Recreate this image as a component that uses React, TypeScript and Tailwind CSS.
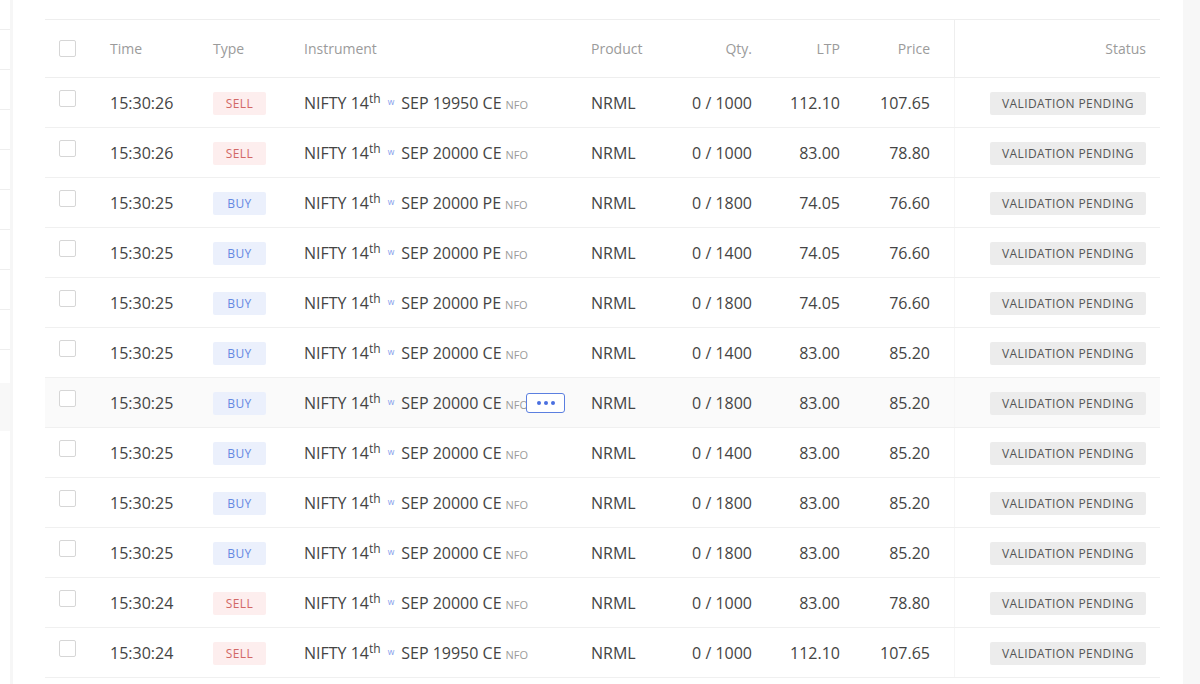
import React from "react";

type Row = {
  time: string;
  type: "SELL" | "BUY";
  strike: string;
  qty: string;
  ltp: string;
  price: string;
};

const rows: Row[] = [
  { time: "15:30:26", type: "SELL", strike: "19950 CE", qty: "0 / 1000", ltp: "112.10", price: "107.65" },
  { time: "15:30:26", type: "SELL", strike: "20000 CE", qty: "0 / 1000", ltp: "83.00", price: "78.80" },
  { time: "15:30:25", type: "BUY", strike: "20000 PE", qty: "0 / 1800", ltp: "74.05", price: "76.60" },
  { time: "15:30:25", type: "BUY", strike: "20000 PE", qty: "0 / 1400", ltp: "74.05", price: "76.60" },
  { time: "15:30:25", type: "BUY", strike: "20000 PE", qty: "0 / 1800", ltp: "74.05", price: "76.60" },
  { time: "15:30:25", type: "BUY", strike: "20000 CE", qty: "0 / 1400", ltp: "83.00", price: "85.20" },
  { time: "15:30:25", type: "BUY", strike: "20000 CE", qty: "0 / 1800", ltp: "83.00", price: "85.20" },
  { time: "15:30:25", type: "BUY", strike: "20000 CE", qty: "0 / 1400", ltp: "83.00", price: "85.20" },
  { time: "15:30:25", type: "BUY", strike: "20000 CE", qty: "0 / 1800", ltp: "83.00", price: "85.20" },
  { time: "15:30:25", type: "BUY", strike: "20000 CE", qty: "0 / 1800", ltp: "83.00", price: "85.20" },
  { time: "15:30:24", type: "SELL", strike: "20000 CE", qty: "0 / 1000", ltp: "83.00", price: "78.80" },
  { time: "15:30:24", type: "SELL", strike: "19950 CE", qty: "0 / 1000", ltp: "112.10", price: "107.65" },
];

function Checkbox({ className = "" }: { className?: string }) {
  return (
    <div
      className={
        "w-[17px] h-[17px] border border-[#d6d6d6] rounded-[2px] bg-white " + className
      }
    />
  );
}

function TypeBadge({ type }: { type: "SELL" | "BUY" }) {
  const cls =
    type === "SELL"
      ? "bg-[#fdeeee] text-[#d26865]"
      : "bg-[#ebf0fc] text-[#6487e2]";
  return (
    <span
      className={
        "inline-flex items-center justify-center w-[53px] h-[23px] mt-[2px] rounded-[2px] text-[12px] tracking-[0.4px] " +
        cls
      }
    >
      {type}
    </span>
  );
}

export default function App() {
  return (
    <div
      className="w-[1200px] h-[684px] overflow-hidden flex bg-white text-[#444444]"
      style={{ fontFamily: '"Open Sans", "Noto Sans", sans-serif' }}
    >
      {/* left strip */}
      <div className="w-[10px] flex-none bg-white">
        <div className="flex flex-col">
          <div className="h-[30px] border-b border-[#eeeeee]" />
          {[0, 1, 2, 3, 4, 5, 6, 7].map((i) => (
            <div key={i} className="h-[40px] border-b border-[#eeeeee]" />
          ))}
          <div className="h-[33px]" />
          <div className="h-[48px] bg-[#f8f8f8]" />
        </div>
      </div>
      <div className="w-[3px] flex-none bg-[#f6f6f6]" />

      {/* main panel */}
      <div className="flex-1 pl-[32px] pt-[19px]">
        <div className="w-[1115px] border-t border-[#eeeeee]">
          {/* header */}
          <div className="flex h-[58px] items-center text-[14px] text-[#9b9b9b] border-b border-[#eeeeee]">
            <div className="w-[65px] pl-[14px] flex-none">
              <Checkbox />
            </div>
            <div className="w-[103px] flex-none">Time</div>
            <div className="w-[91px] flex-none">Type</div>
            <div className="w-[287px] flex-none">Instrument</div>
            <div className="w-[89px] flex-none">Product</div>
            <div className="w-[84px] flex-none text-right pr-[12px]">Qty.</div>
            <div className="w-[88px] flex-none text-right pr-[12px]">LTP</div>
            <div className="w-[102px] flex-none text-right pr-[24px]">Price</div>
            <div className="w-[206px] flex-none self-stretch flex items-center justify-end pr-[14px] border-l border-[#eeeeee]">
              Status
            </div>
          </div>

          {rows.map((r, i) => (
            <div
              key={i}
              className={
                "flex h-[50px] items-center text-[16px] border-b border-[#f0f0f0] " +
                (i === 6 ? "bg-[#fafafa]" : "")
              }
            >
              <div className="w-[65px] pl-[14px] flex-none self-start pt-[12px]">
                <Checkbox />
              </div>
              <div className="w-[103px] flex-none">{r.time}</div>
              <div className="w-[91px] flex-none flex">
                <TypeBadge type={r.type} />
              </div>
              <div className="w-[287px] flex-none relative whitespace-nowrap">
                <span>NIFTY 14</span>
                <span className="text-[12px] align-[6px]">th</span>
                <span className="text-[8.5px] text-[#7f9cec] ml-[7px] mr-[7px] align-[4px]">w</span>
                <span>SEP {r.strike}</span>
                <span className="text-[11px] text-[#9b9b9b] ml-[4px]">NFO</span>
                {i === 6 && (
                  <div className="absolute left-[222px] top-1/2 -translate-y-1/2 w-[39px] h-[20px] bg-white border border-[#5b7fe0] rounded-[3px] flex items-center justify-center gap-[3px]">
                    <span className="w-[4px] h-[4px] rounded-full bg-[#4a6fe0]" />
                    <span className="w-[4px] h-[4px] rounded-full bg-[#4a6fe0]" />
                    <span className="w-[4px] h-[4px] rounded-full bg-[#4a6fe0]" />
                  </div>
                )}
              </div>
              <div className="w-[89px] flex-none">NRML</div>
              <div className="w-[84px] flex-none text-right pr-[12px]">{r.qty}</div>
              <div className="w-[88px] flex-none text-right pr-[12px]">{r.ltp}</div>
              <div className="w-[102px] flex-none text-right pr-[24px]">{r.price}</div>
              <div className="w-[206px] flex-none self-stretch flex items-center justify-end pr-[14px] border-l border-[#f6f6f6]">
                <span className="inline-flex items-center h-[23px] mt-[2px] px-[12px] bg-[#ececec] rounded-[2px] text-[12px] tracking-[0.4px] text-[#555555]">
                  VALIDATION PENDING
                </span>
              </div>
            </div>
          ))}
        </div>
      </div>

      {/* right strip */}
      <div className="w-[17px] flex-none bg-[#f7f7f7]" />
    </div>
  );
}
